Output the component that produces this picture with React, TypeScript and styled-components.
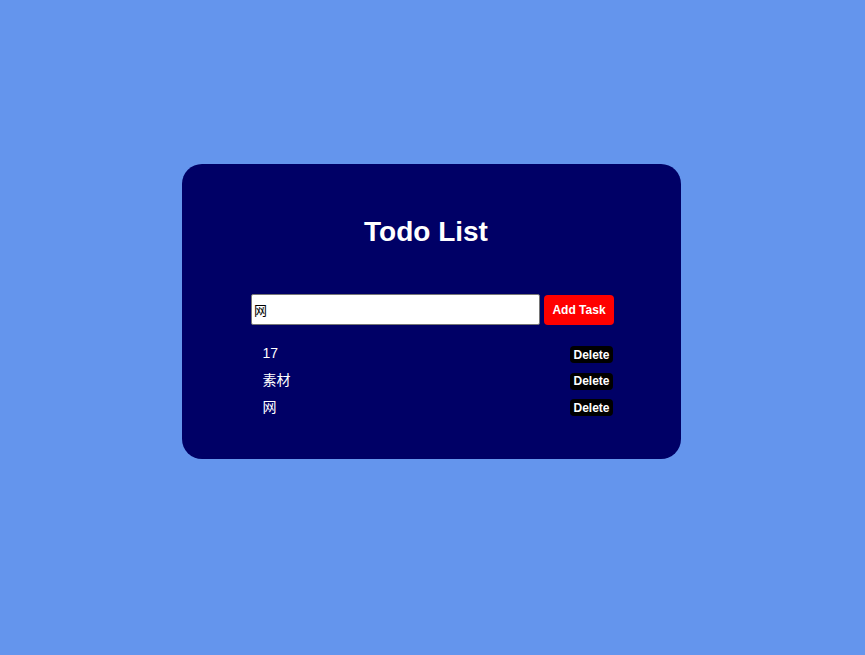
import { useState } from 'react';
import styled, { createGlobalStyle } from 'styled-components';

const GlobalStyle = createGlobalStyle`
  html, body {
    margin: 0;
    padding: 0;
    height: 100%;
    background: #6495ed;
    font-family: "Liberation Sans", Arial, "Noto Sans CJK SC", sans-serif;
  }
  #root { height: 100%; }
`;

const Page = styled.div`
  height: 655px;
  display: flex;
  justify-content: center;
  align-items: center;
`;

const Card = styled.div`
  width: 499px;
  height: 295px;
  box-sizing: border-box;
  background: #000066;
  border-radius: 20px;
  padding-top: 52px;
  display: flex;
  flex-direction: column;
  align-items: center;
  margin: -32px 2px 0 0;
`;

const Title = styled.h1`
  margin: 0 11px 46px 0;
  font-size: 28px;
  line-height: 32px;
  font-weight: 700;
  color: #fff;
`;

const Form = styled.form`
  display: flex;
  gap: 4px;
  width: 363px;
  margin-left: 2px;
`;

const Input = styled.input`
  width: 289px;
  height: 31px;
  box-sizing: border-box;
  border: 1px solid #767676;
  border-radius: 2px;
  padding: 0 2px;
  font-size: 13px;
  font-family: "Liberation Sans", Arial, "Noto Sans CJK SC", sans-serif;
  color: #000;
  outline: none;
`;

const AddButton = styled.button`
  width: 70px;
  height: 30px;
  margin-top: 1px;
  border: none;
  border-radius: 4px;
  background: #ff0000;
  color: #fff;
  font-weight: 700;
  font-size: 12px;
  font-family: "Liberation Sans", Arial, sans-serif;
  cursor: pointer;
`;

const List = styled.ul`
  list-style: none;
  margin: 20px 0 0 1px;
  padding: 0 0 0 11px;
  width: 361px;
  box-sizing: border-box;
  display: flex;
  flex-direction: column;
  gap: 7.5px;
`;

const Item = styled.li`
  display: flex;
  justify-content: space-between;
  align-items: center;
  height: 19px;
  color: #fff;
  font-size: 14px;
`;

const ItemText = styled.span`
  margin-top: -4px;
`;

const DeleteButton = styled.button`
  height: 17px;
  border: none;
  border-radius: 4px;
  background: #000;
  color: #fff;
  font-weight: 700;
  font-size: 12px;
  padding: 0 3px;
  font-family: "Liberation Sans", Arial, sans-serif;
  cursor: pointer;
`;

export default function App() {
  const [tasks, setTasks] = useState<string[]>(['17', '素材', '网']);
  const [value, setValue] = useState('网');

  const addTask = (e: React.FormEvent) => {
    e.preventDefault();
    if (!value.trim()) return;
    setTasks([...tasks, value.trim()]);
    setValue('');
  };

  return (
    <>
      <GlobalStyle />
      <Page>
        <Card>
          <Title>Todo List</Title>
          <Form onSubmit={addTask}>
            <Input value={value} onChange={(e) => setValue(e.target.value)} />
            <AddButton type="submit">Add Task</AddButton>
          </Form>
          <List>
            {tasks.map((task, i) => (
              <Item key={i}>
                <ItemText>{task}</ItemText>
                <DeleteButton onClick={() => setTasks(tasks.filter((_, j) => j !== i))}>
                  Delete
                </DeleteButton>
              </Item>
            ))}
          </List>
        </Card>
      </Page>
    </>
  );
}
